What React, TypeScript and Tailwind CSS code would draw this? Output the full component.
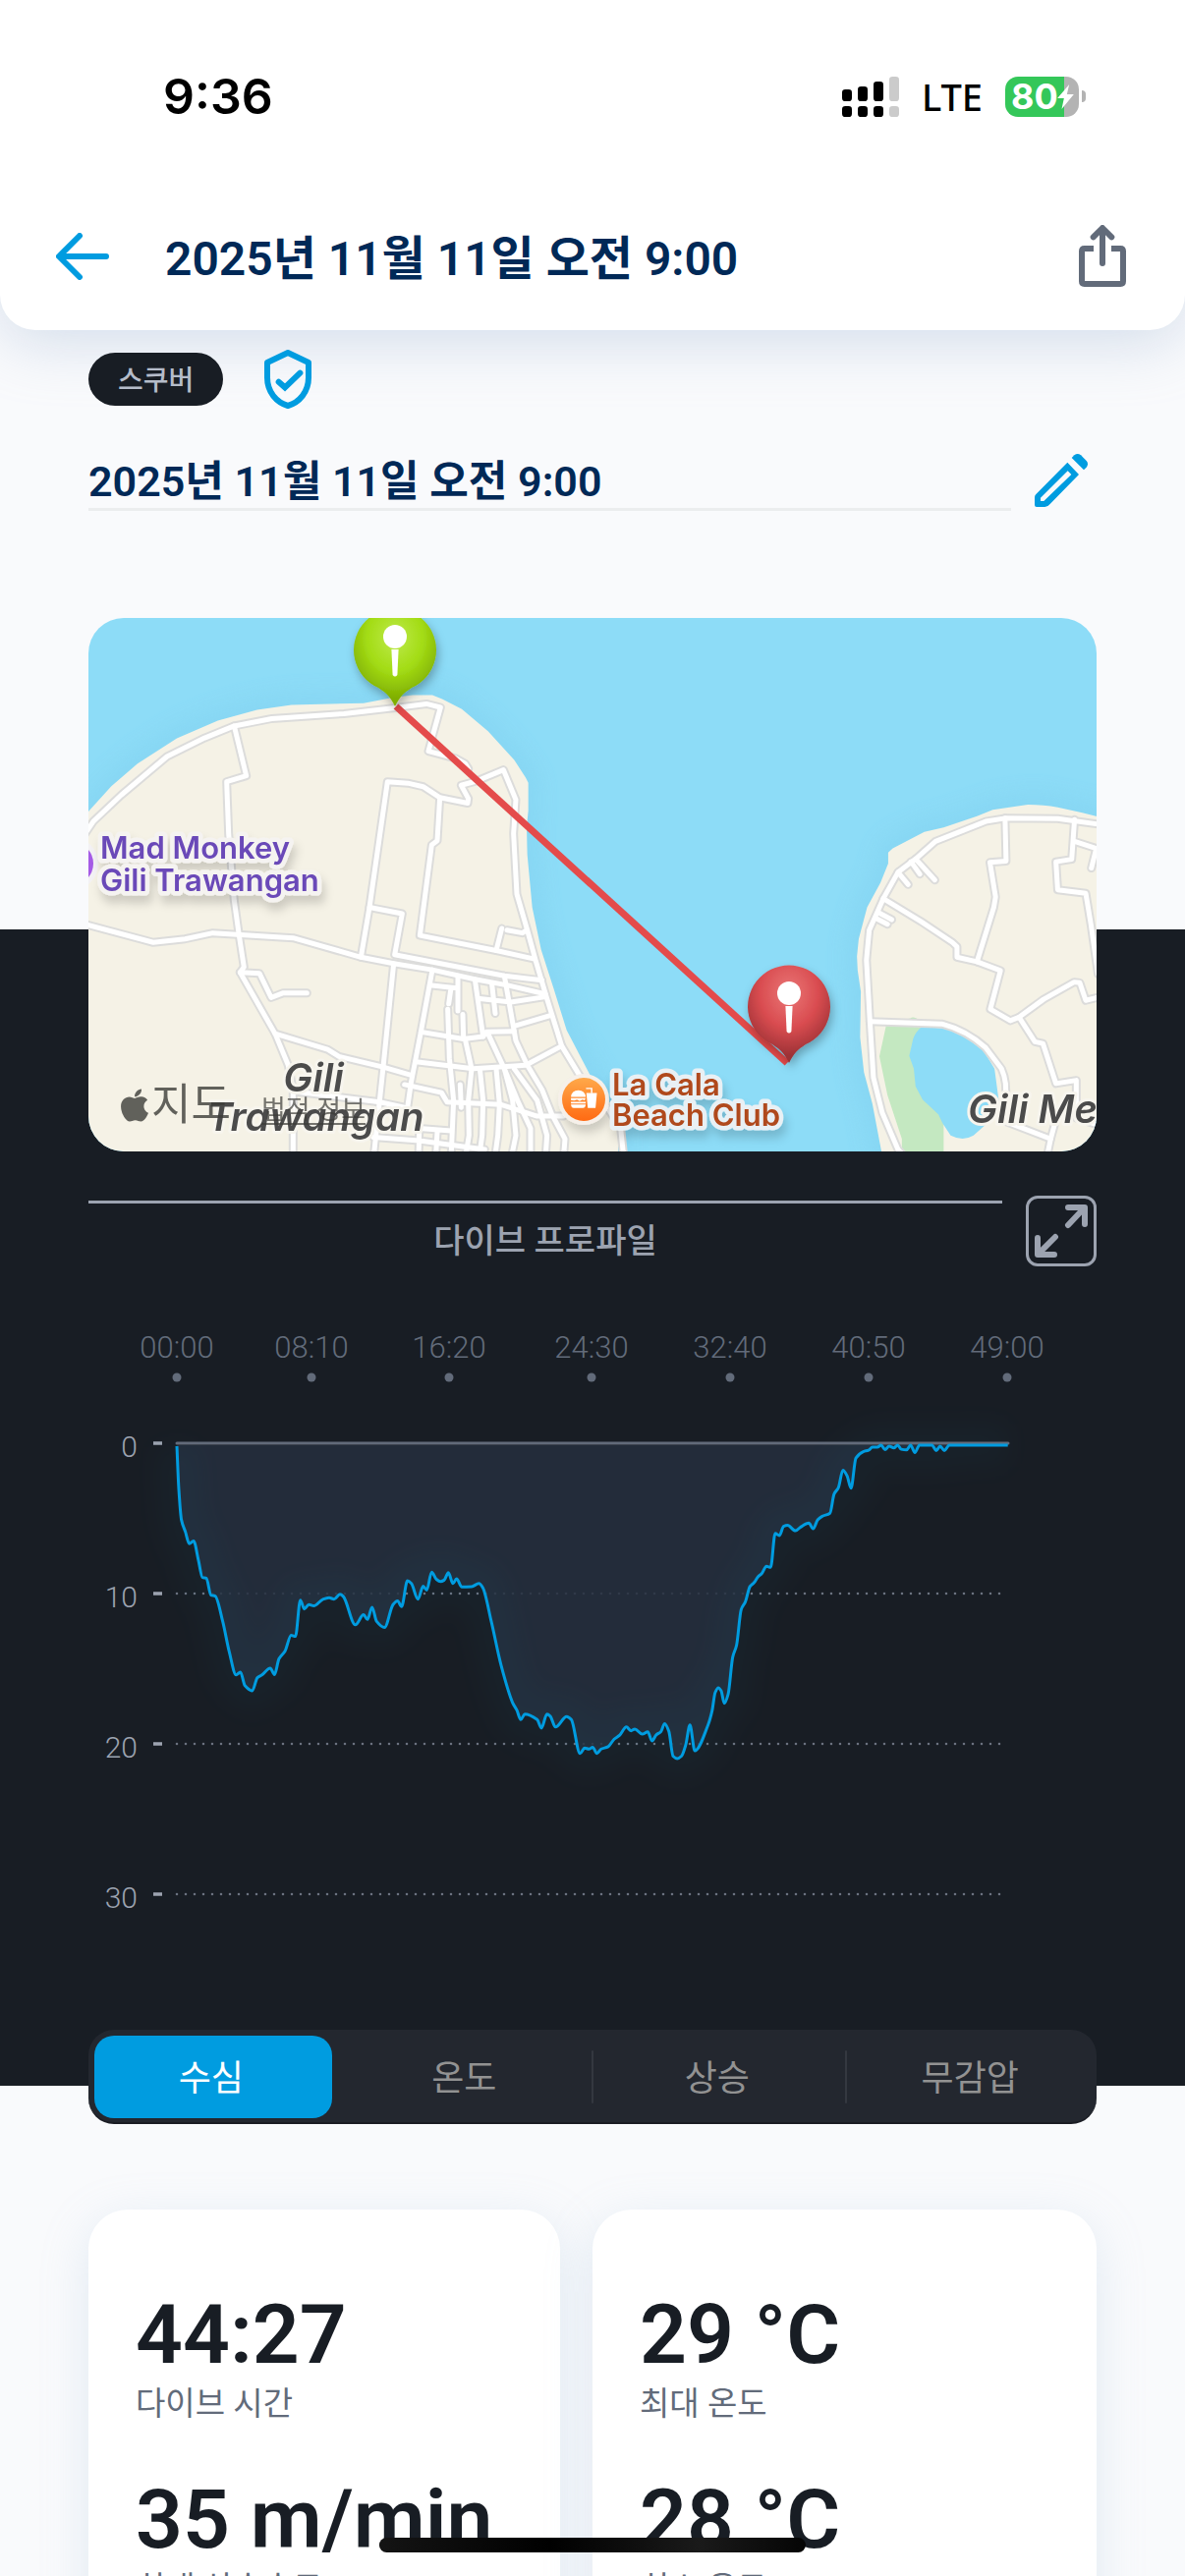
import { useState } from "react";
import { FaApple } from "react-icons/fa";

const KR = "font-[Roboto,'Noto_Sans_CJK_KR',sans-serif]";

/* ---------- status bar ---------- */

function SignalIcon() {
  const tops = [39, 30, 15, 0];
  return (
    <svg viewBox="0 0 174 123" className="h-[41px] w-[58px]" aria-hidden="true">
      {tops.map((top, i) => (
        <g key={i} fill={i === 3 ? "#cbcbcb" : "#000"}>
          <rect x={i * 48} y={top} width="30" height={75 - top} rx="10" />
          <rect x={i * 48} y="90" width="30" height="33" rx="10" />
        </g>
      ))}
    </svg>
  );
}

function Battery() {
  return (
    <div className="flex items-center gap-[3px]">
      <div className="flex h-[41px] w-[75px] items-center rounded-[13px] bg-[linear-gradient(90deg,#34c759_80%,#b3b3b3_80%)] pl-[6px]">
        <span className="font-[Inter,sans-serif] text-[36px] leading-none font-bold text-white">80</span>
        <svg viewBox="0 0 50 75" className="-ml-px h-[25px] w-[17px] shrink-0" aria-hidden="true">
          <path d="M36 0 0 42h20L13 75 50 30H29Z" fill="#fff" />
        </svg>
      </div>
      <div className="h-[12px] w-[4px] rounded-r-full bg-[#b3b3b3]" />
    </div>
  );
}

/* ---------- icons ---------- */

function BackIcon() {
  return (
    <svg viewBox="0 0 54 48" className="h-[48px] w-[54px]" fill="none" stroke="#009ce0" strokeWidth="6" strokeLinecap="round" strokeLinejoin="round" aria-hidden="true">
      <path d="M51 24H4M24 3 3 24l21 21" />
    </svg>
  );
}

function ShareIcon() {
  return (
    <svg viewBox="0 0 144 189" className="h-[63px] w-[48px]" fill="none" stroke="#626b7a" strokeWidth="18" aria-hidden="true">
      <path d="M45 72H17Q9 72 9 80v92q0 8 8 8h110q8 0 8-8V80q0-8-8-8H99" />
      <path d="M72 117V12M44 37l28-28 28 28" strokeLinecap="round" strokeLinejoin="round" />
    </svg>
  );
}

function ShieldIcon() {
  return (
    <svg viewBox="0 0 144 180" className="h-[60px] w-[48px]" fill="none" stroke="#009ce0" strokeWidth="18" aria-label="인증됨" role="img">
      <path d="M72 9 9 39v46c0 44 28 76 63 86 35-10 63-42 63-86V39Z" strokeLinejoin="round" />
      <path d="m44 98 19 17 46-44" strokeLinecap="round" />
    </svg>
  );
}

function PencilIcon() {
  return (
    <svg viewBox="0 0 162 162" className="size-[54px]" fill="#009ce0" aria-hidden="true">
      <path fillRule="evenodd" d="M100 26l35 37-88 90q-7 9-16 9H6q-6 0-6-6v-24q0-6 5-10ZM101 52 18 134v10h10l84-81Z" />
      <path d="M113 12 121 4q10-8 20 0l17 17q8 9 0 20l-8 8Z" />
    </svg>
  );
}

function ExpandIcon() {
  return (
    <svg viewBox="0 0 54 54" className="size-[54px]" fill="none" stroke="#9ca3b0" strokeWidth="6" strokeLinecap="round" strokeLinejoin="round" aria-hidden="true">
      <path d="M34 3h17v17M50 4 34 21M20 51H3V34M4 50l17-17" />
    </svg>
  );
}

/* ---------- map ---------- */

const westRoads = [
  "M20 640 45 605 130 530 270 420 385 367 475 333 590 312 810 298 960 282 1062 270 1105 280 1068 405 1150 425 1180 440 1190 455",
  "M475 333 512 475 452 492 458 640 475 830 490 930 505 1020 493 1035 600 1210 640 1300 655 1370 655 1560",
  "M493 1035 552 1038 588 1107 625 1094 697 1094",
  "M20 898 228 950 325 940 410 923 655 937 862 992 962 1010 1080 1028 1210 1055 1310 1072 1425 1097",
  "M862 992 888 850 943 492 1005 496 1052 506 1103 537 1188 553 1190 540 1168 502 1215 490 1297 458 1335 543 1328 640 1338 812 1370 915 1395 1000 1430 1110 1475 1245 1540 1345 1600 1400 1655 1480 1665 1568",
  "M1103 537 1095 660 1078 672 1042 930 1275 973 1392 997",
  "M1275 973 1292 910M1308 915 1355 923 1368 915",
  "M888 850 988 868 965 985 1300 1045 1415 1058",
  "M962 1010 930 1305 900 1568",
  "M1080 1028 1045 1205 1015 1350 995 1480",
  "M1072 1072 1155 1080M1158 1045 1158 1145M1137 1080 1130 1125M1127 1140 1132 1280 1145 1400 1137 1568M1173 1155 1175 1220",
  "M600 1210 760 1255 795 1275 930 1305 1015 1328",
  "M660 1375 920 1405 995 1420M995 1355 1108 1378 1125 1405 1290 1412 1400 1445 1480 1445",
  "M1045 1205 1175 1225 1235 1218 1245 1205 1330 1203M1030 1290 1205 1310 1365 1300 1475 1245",
  "M1210 1055 1235 1218M1225 1110 1320 1120 1425 1105M1262 1070 1272 1152M1300 1045 1335 1230 1370 1300 1415 1370 1445 1440 1485 1510 1480 1568",
  "M1335 1187 1440 1158M1180 1225 1200 1310 1190 1400 1192 1500 1180 1568",
  "M1250 1210 1300 1310 1340 1400 1380 1480 1380 1568M1225 1310 1235 1400 1232 1500 1222 1568",
  "M1275 1310 1285 1410 1280 1500 1270 1568M1300 1310 1325 1400 1335 1500 1320 1568M1330 1310 1400 1400 1430 1500 1425 1568",
  "M1165 1355 1168 1420M900 1505 1040 1515 1240 1540M1040 1480 1138 1487M1040 1490 1038 1568M1095 1490 1090 1568",
];

const eastRoads = [
  "M960 1568 935 1540 890 1435 865 1335 855 1175 845 1000 853 915 893 825 935 750 985 712 1042 662 1185 605 1240 596 1390 597 1520 615",
  "M985 712 1040 772M972 720 997 755M935 750 964 785M880 865 917 885M870 880 905 898",
  "M1240 596 1243 718 1197 722 1213 820 1208 850 1160 1005",
  "M893 825 1000 890 1090 950 1103 962 1103 992 1160 1005 1227 1030 1198 1140 1255 1173 1280 1163 1350 1112 1437 1063 1453 1065 1470 1115 1520 1103",
  "M1438 600 1430 713 1385 720 1390 800 1470 810 1485 900 1505 1040M1438 662 1500 682 1486 738",
  "M855 1175 1060 1182Q1130 1200 1185 1250L1230 1310Q1248 1350 1240 1400V1460L1370 1510 1358 1568",
  "M1280 1163 1325 1233 1348 1238 1385 1352 1443 1343V1450L1520 1475M1385 1455 1370 1510",
];

const WEST = "translate(-10 -9) scale(.33333 .35714)";
const EAST = "translate(490 -9) scale(.35714)";

const westLand =
  "M0 610 30 577 100 505 180 440 300 368 425 318 545 287 650 273 870 268 960 252 1020 245H1080L1110 256 1170 285 1250 348 1330 430 1365 480 1373 495V575L1368 620 1370 700 1385 850 1412 970 1450 1080 1490 1200 1560 1325 1640 1430 1647 1480V1568H0Z";
const eastLand =
  "M1530 598 1460 580 1390 565Q1350 557 1305 557L1205 572 1160 590 1065 622 1010 635 920 682 907 694V725L885 780 847 850 823 940 818 990 820 1030 829 1090 827 1220 838 1320 862 1410 892 1568H1530Z";

function Roads({ color, width }: { color: string; width: number }) {
  return (
    <g fill="none" stroke={color} strokeWidth={width} strokeLinecap="round" strokeLinejoin="round">
      <g transform={WEST}>
        {westRoads.map((d) => (
          <path key={d} d={d} vectorEffect="non-scaling-stroke" />
        ))}
      </g>
      <g transform={EAST}>
        {eastRoads.map((d) => (
          <path key={d} d={d} vectorEffect="non-scaling-stroke" />
        ))}
      </g>
    </g>
  );
}

function Pin({ x, y, gradient }: { x: number; y: number; gradient: string }) {
  return (
    <g transform={`translate(${x} ${y})`}>
      <path d="M0 57C-5 47-8 44-17 38A42 42 0 1 1 17 38C8 44 5 47 0 57Z" fill={gradient} filter="url(#pin-shadow)" />
      <circle cy="-14" r="12" fill="#fff" />
      <path d="M-3.6-1H3.6L2.4 25Q0 28-2.4 25Z" fill="#fff" />
    </g>
  );
}

function FoodMark() {
  return (
    <g fill="#fff">
      <path d="M3 1390Q5 1371 24 1371T45 1390ZM3 1394H45L42 1400 36 1398 28 1402 20 1398 12 1401 3 1399ZM3 1404H45V1409H3ZM3 1412H45Q44 1422 37 1422H11Q4 1422 3 1412Z" />
      <path d="M47 1379H77L73 1422H51Z" />
      <path d="M46 1366H62V1380" fill="none" stroke="#fff" strokeWidth="4" />
    </g>
  );
}

function DiveMap() {
  return (
    <div className="relative h-[543px] overflow-hidden rounded-[36px] bg-[#8ddcf7]">
      <svg viewBox="0 0 1026 543" preserveAspectRatio="xMidYMid slice" className="size-full" role="img" aria-label="다이브 위치 지도">
        <defs>
          <radialGradient id="pin-green" cx="50%" cy="30%" r="62%">
            <stop offset="0" stopColor="#bdea4b" />
            <stop offset=".55" stopColor="#a3dc15" />
            <stop offset="1" stopColor="#7fae00" />
          </radialGradient>
          <radialGradient id="pin-red" cx="50%" cy="28%" r="65%">
            <stop offset="0" stopColor="#ea7777" />
            <stop offset=".55" stopColor="#d94c50" />
            <stop offset="1" stopColor="#9c3135" />
          </radialGradient>
          <linearGradient id="poi-food" x2="0" y2="1">
            <stop stopColor="#ffa94a" />
            <stop offset="1" stopColor="#ff6a13" />
          </linearGradient>
          <filter id="pin-shadow" x="-30%" y="-30%" width="160%" height="160%">
            <feDropShadow dx="2" dy="5" stdDeviation="5" floodOpacity=".28" />
          </filter>
          <filter id="coast" x="-20%" y="-20%" width="140%" height="140%">
            <feGaussianBlur stdDeviation="30" />
          </filter>
          <filter id="poi-shadow" x="-30%" y="-30%" width="160%" height="170%">
            <feDropShadow dx="3" dy="8" stdDeviation="5" floodOpacity=".16" />
          </filter>
        </defs>
        <g fill="none" stroke="#7fcfee" strokeWidth="60" opacity=".45">
          <path d={westLand} transform={WEST} filter="url(#coast)" />
          <path d={eastLand} transform={EAST} filter="url(#coast)" />
        </g>
        <path d={westLand} transform={WEST} fill="#f5f2e6" />
        <g transform={EAST}>
          <path d={eastLand} fill="#f5f2e6" />
          <path d="M902 1182 970 1166Q980 1158 1000 1175L1010 1190 1065 1465V1568H946V1510L905 1385 882 1275Z" fill="#c4e8c1" />
          <path d="M1000 1193Q1090 1188 1130 1222L1180 1260 1210 1310 1222 1400 1212 1445 1150 1500Q1120 1518 1085 1500L1062 1465 1050 1440 1005 1398 985 1360 980 1310 967 1273 978 1225Q985 1205 1000 1193Z" fill="#8ddcf7" />
        </g>
        <Roads color="#dcdcdb" width={9} />
        <Roads color="#ffffff" width={5} />

        <path d="M313 90 711 453" stroke="#e44b4b" strokeWidth="7" />
        <Pin x={312} y={33} gradient="url(#pin-green)" />
        <Pin x={713} y={396} gradient="url(#pin-red)" />

        <circle cx="-17" cy="250" r="27" fill="#f3f1f4" />
        <circle cx="-17" cy="250" r="22" fill="#a55be6" />
        <circle cx="504" cy="490" r="26" fill="#f6f0ea" filter="url(#poi-shadow)" />
        <circle cx="504" cy="490" r="22" fill="url(#poi-food)" />
        <g transform={EAST}>
          <FoodMark />
        </g>

        <g className="font-[Inter,sans-serif] font-semibold" strokeLinejoin="round">
          <g fontSize="31" stroke="#f5f3f1" strokeWidth="9" filter="url(#poi-shadow)" style={{ paintOrder: "stroke" }}>
            <g fill="#6a49b8">
              <text x="12" y="245">Mad Monkey</text>
              <text x="12" y="278">Gili Trawangan</text>
            </g>
            <g fill="#b0481a" stroke="#e9f0f4">
              <text x="533" y="486">La Cala</text>
              <text x="533" y="517">Beach Club</text>
            </g>
          </g>
          <g fontSize="40" fill="#4b4b4b" stroke="#f7f5ee" strokeWidth="6" className="italic" style={{ paintOrder: "stroke" }}>
            <text x="229" y="482" textAnchor="middle">Gili</text>
            <text x="231" y="522" textAnchor="middle">Trawangan</text>
            <text x="895" y="514">Gili Me</text>
          </g>
        </g>
      </svg>
      <div className={`absolute bottom-[22px] left-[28px] flex items-end text-[#3c3c38]/80 ${KR}`}>
        <FaApple className="mb-[6px] size-[38px]" aria-hidden="true" />
        <span className="-ml-[2px] text-[44px] leading-[50px]">지도</span>
        <a href="#legal" className="ml-[31px] text-[27px] leading-[40px] text-[#3c3c38]/70 underline underline-offset-4">
          법적 정보
        </a>
      </div>
    </div>
  );
}

/* ---------- depth chart ---------- */

type Point = [number, number];

const descent: Point[] = [
  [300, 122], [306, 250], [314, 340], [326, 375], [338, 410], [351, 402], [366, 460], [378, 510], [390, 512], [404, 562],
  [417, 565], [440, 640], [460, 730], [481, 798], [494, 790], [508, 830], [530, 845], [546, 806], [560, 798], [585, 778],
  [598, 797], [612, 750], [630, 728], [649, 681], [662, 684], [677, 577], [689, 603], [703, 590], [718, 594], [745, 575],
  [765, 570], [780, 574], [798, 560], [808, 566], [845, 650], [870, 620], [882, 634], [896, 598], [910, 640], [934, 658],
  [960, 590], [974, 579], [986, 596], [1004, 520], [1016, 528], [1036, 574], [1052, 536], [1063, 547], [1078, 494], [1092, 515],
  [1105, 522], [1116, 518], [1129, 496], [1143, 528], [1154, 514], [1170, 538], [1200, 537], [1222, 528], [1234, 540], [1260, 640],
  [1290, 770], [1325, 880], [1338, 902], [1350, 930], [1362, 914], [1400, 930], [1413, 955], [1430, 914], [1440, 920], [1456, 952],
  [1490, 921],
];

const ascent: Point[] = [
  [60, 930], [85, 1030], [98, 1014], [110, 1017], [121, 1012], [133, 1030], [145, 1017], [165, 1010], [182, 988], [198, 976],
  [217, 952], [230, 963], [241, 958], [262, 973], [278, 966], [290, 993], [302, 975], [315, 966], [326, 942], [338, 965],
  [350, 1038], [362, 1045], [374, 1038], [386, 1005], [398, 946], [412, 1022], [450, 945], [461, 905], [470, 850], [479, 836],
  [487, 845], [496, 882], [507, 855], [520, 745], [531, 710], [544, 605], [556, 582], [569, 537], [581, 525], [592, 508],
  [603, 498], [616, 477], [628, 480], [641, 380], [653, 386], [665, 359], [676, 356], [699, 372], [712, 362], [737, 349],
  [749, 366], [762, 340], [775, 329], [797, 320], [809, 263], [821, 245], [834, 193], [846, 210], [857, 246], [871, 157],
  [892, 138], [907, 134], [918, 125], [932, 125], [943, 119], [954, 132], [966, 122], [979, 127], [990, 119], [1000, 131],
  [1015, 133], [1027, 119], [1039, 141], [1052, 119], [1088, 119], [1100, 135], [1111, 122], [1123, 135], [1137, 119], [1304, 119],
];

const samples: Point[] = [
  ...descent.map(([x, y]): Point => [x / 3 - 10, y * 0.3444 + 90]),
  ...ascent.map(([x, y]): Point => [x / 2.8 + 470, y * 0.3444 + 90]),
];

/** Cubic curve through the points that never overshoots between samples. */
function smoothPath(pts: Point[]): string {
  const slope = pts.slice(1).map((p, i) => (p[1] - pts[i][1]) / (p[0] - pts[i][0]));
  const tangent = pts.map((_, i) => {
    const a = slope[i - 1];
    const b = slope[i];
    if (a === undefined) return b;
    if (b === undefined) return a;
    return a * b <= 0 ? 0 : (2 * a * b) / (a + b);
  });
  let d = `M${pts[0][0]} ${pts[0][1]}`;
  for (let i = 1; i < pts.length; i++) {
    const [x0, y0] = pts[i - 1];
    const [x1, y1] = pts[i];
    const h = (x1 - x0) / 3;
    d += `C${x0 + h} ${y0 + h * tangent[i - 1]} ${x1 - h} ${y1 - h * tangent[i]} ${x1} ${y1}`;
  }
  return d;
}

const profile = smoothPath(samples);

const times: [string, number][] = [
  ["00:00", 90], ["08:10", 227], ["16:20", 367], ["24:30", 512], ["32:40", 653], ["40:50", 794], ["49:00", 935],
];
const depths: [number, number][] = [[0, 129], [10, 282], [20, 435], [30, 588]];

function DepthChart() {
  return (
    <svg viewBox="0 0 1026 640" className="w-full font-[Roboto,sans-serif]" role="img" aria-label="수심 그래프">
      <defs>
        <filter id="glow" x="-10%" y="-20%" width="120%" height="140%">
          <feGaussianBlur stdDeviation="14" />
        </filter>
      </defs>
      {times.map(([label, x]) => (
        <g key={label} fill="#626b7a">
          <text x={x} y="42" textAnchor="middle" fontSize="31" fontWeight="300">{label}</text>
          <circle cx={x} cy="62" r="4.5" />
        </g>
      ))}
      {depths.map(([label, y]) => (
        <g key={label}>
          <text x="50" y={y + 14} textAnchor="end" fontSize="30" fontWeight="300" fill="#9ca3b0">{label}</text>
          <path d={`M66 ${y}h9`} stroke="#9ca3b0" strokeWidth="3.5" />
          {y > 129 && (
            <path d={`M90 ${y}H928`} stroke="#6b7280" strokeWidth="2.6" strokeLinecap="round" strokeDasharray="0 9" />
          )}
        </g>
      ))}
      <path d={`${profile}V131H90Z`} fill="#262f3e" fillOpacity=".85" />
      <path d={profile} fill="none" stroke="#1b8fb0" strokeWidth="44" opacity=".04" filter="url(#glow)" />
      <path d="M90 129H936" stroke="#626b7a" strokeWidth="3" strokeLinecap="round" />
      <path d={profile} fill="none" stroke="#009ce0" strokeWidth="3" strokeLinejoin="round" />
    </svg>
  );
}

/* ---------- tabs and stats ---------- */

const tabs = ["수심", "온도", "상승", "무감압"];

function Tabs() {
  const [active, setActive] = useState(0);
  return (
    <div role="tablist" className="flex h-[96px] items-stretch rounded-[26px] border-b-2 border-[#1a1c23] bg-[#23272f] px-[6px] pt-[6px] pb-[4px]">
      {tabs.map((tab, i) => (
        <div key={tab} className="contents">
          {i > 0 && (
            <span
              className={`mx-[7px] my-[15px] w-[2px] shrink-0 rounded-full ${i === active || i - 1 === active ? "bg-transparent" : "bg-[#343840]"}`}
            />
          )}
          <button
            role="tab"
            aria-selected={i === active}
            onClick={() => setActive(i)}
            className={`flex-1 rounded-[20px] pt-[4px] pr-[4px] text-[36px] leading-none ${i === active ? "bg-[#009ce0] text-white" : "text-[#929292]"}`}
          >
            {tab}
          </button>
        </div>
      ))}
    </div>
  );
}

function StatCard({ stats }: { stats: [string, string][] }) {
  return (
    <dl className="flex flex-col gap-[48px] rounded-[40px] bg-white px-[48px] pt-[78px] pb-[78px] shadow-[0_12px_48px_rgba(160,190,215,0.26)]">
      {stats.map(([value, label]) => (
        <div key={label} className="flex flex-col-reverse">
          <dt className="text-[33px] leading-[40px] text-[#626b7a]">{label}</dt>
          <dd className="text-[84px] leading-[100px] font-semibold whitespace-nowrap text-[#181d24]">{value}</dd>
        </div>
      ))}
    </dl>
  );
}

export default function App() {
  return (
    <div className={`relative flex h-screen flex-col overflow-hidden bg-[#f9fafc] ${KR}`} lang="ko">
      <header className="relative z-10 shrink-0 rounded-b-[36px] bg-white pb-[41px] shadow-[0_12px_60px_rgba(160,180,212,0.42)]">
        <div className="flex items-center justify-between pt-[72px] pr-[101px] pl-[166px]">
          <time className="font-[Inter,sans-serif] text-[50px] leading-[52px] font-semibold text-black">9:36</time>
          <div className="flex items-center gap-[23px]">
            <SignalIcon />
            <span className="font-['Noto_Sans',sans-serif] text-[38px] leading-none font-medium text-black">LTE</span>
            <Battery />
          </div>
        </div>
        <div className="mt-[102px] flex items-center pr-[60px] pl-[57px]">
          <button aria-label="뒤로">
            <BackIcon />
          </button>
          <h1 className="ml-[57px] flex-1 pt-[6px] text-[48px] leading-[63px] font-semibold text-[#002957]">2025년 11월 11일 오전 9:00</h1>
          <button aria-label="공유">
            <ShareIcon />
          </button>
        </div>
      </header>

      <main className="flex flex-col">
        <section className="px-[90px] pt-[20px]">
          <div className="relative z-20 flex items-center gap-[42px]">
            <span className="flex h-[54px] items-center rounded-full bg-[#181d24] px-[30px] pt-[3px] text-[28px] leading-none font-medium text-[#b5bcc9]">스쿠버</span>
            <ShieldIcon />
          </div>
          <div className="mt-[41px] flex items-center gap-[24px]">
            <h2 className="flex-1 border-b-3 border-[#ebedee] pt-[6px] text-[43px] leading-[54px] font-semibold text-[#002957]">
              2025년 11월 11일 오전 9:00
            </h2>
            <button aria-label="편집" className="mr-[9px]">
              <PencilIcon />
            </button>
          </div>
        </section>

        <section className="mt-[426px] bg-[#181d24] px-[90px]">
          <div className="-mt-[317px]">
            <DiveMap />
          </div>
          <div className="mt-[45px] flex gap-[24px]">
            <h3 className="mt-[5px] flex-1 border-t-3 border-[#9ca3b0] pt-[13px] text-center text-[34px] leading-[50px] font-medium text-[#9ca3b0]">
              다이브 프로파일
            </h3>
            <button aria-label="확대" className="flex size-[72px] items-center justify-center rounded-[12px] border-3 border-[#9ca3b0]">
              <ExpandIcon />
            </button>
          </div>
          <div className="mt-[51px]">
            <DepthChart />
          </div>
          <div className="mt-[86px] -mb-[39px]">
            <Tabs />
          </div>
        </section>

        <section className="mt-[126px] grid grid-cols-[480fr_513fr] gap-[33px] px-[90px]">
          <StatCard stats={[["44:27", "다이브 시간"], ["35 m/min", "최대 상승속도"]]} />
          <StatCard stats={[["29 °C", "최대 온도"], ["28 °C", "최소 온도"]]} />
        </section>
      </main>

      <div className="absolute bottom-[24px] left-1/2 z-20 h-[15px] w-[36%] -translate-x-1/2 rounded-full bg-[linear-gradient(90deg,#141414,#000_40%,#1a1a1a_75%,#050505)]" />
    </div>
  );
}
